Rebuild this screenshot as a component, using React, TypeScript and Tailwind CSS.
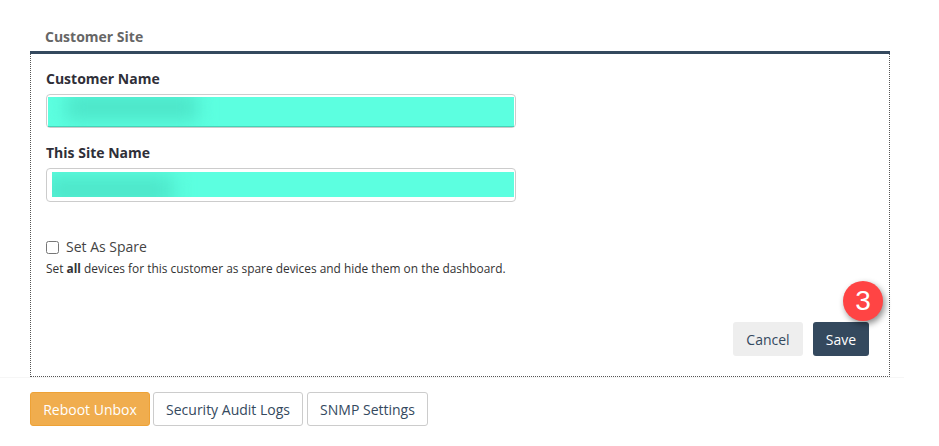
export default function App() {
  return (
    <div className="relative w-[939px] h-[446px] bg-white overflow-hidden font-['Open_Sans',sans-serif] text-[#333]">
      <div className="ml-[30px] w-[860px] pt-[27px]">
        <div className="pl-[15px] h-[24px] text-[14px] leading-[20px] font-bold text-[#666]">Customer Site</div>
        <div className="h-[3px] bg-[#34495e]" />
        <div className="relative h-[323px] border-l border-r border-b border-dotted border-[#555] pl-[15px] pr-[20px] pt-[15px]">
          <div className="h-[20px] text-[14px] leading-[20px] font-bold text-[#2f2f38]">Customer Name</div>
          <div className="mt-[5px] w-[470px] h-[34px] border border-[#ccc] rounded-[4px] pt-[2px] pl-[1px] pr-[1px]">
            <div className="relative h-[30px] bg-[#5cffe0] border-b border-[#45d4b8] overflow-hidden">
              <div className="absolute left-[18px] top-[-4px] w-[132px] h-[28px] bg-[#4de6c9] blur-[9px]" />
            </div>
          </div>
          <div className="mt-[15px] h-[20px] text-[14px] leading-[20px] font-bold text-[#2f2f38]">This Site Name</div>
          <div className="mt-[5px] w-[470px] h-[34px] border border-[#ccc] rounded-[4px] pt-[3px] pl-[5px] pr-[1px]">
            <div className="relative h-[25px] bg-[#5cffe0] overflow-hidden">
              <div className="absolute left-[-8px] top-[3px] w-[130px] h-[30px] bg-[#4de6c9] blur-[10px]" />
            </div>
          </div>
          <label className="mt-[35px] flex items-center h-[20px]">
            <input type="checkbox" className="w-[13px] h-[13px] m-0" />
            <span className="ml-[7px] text-[14px] leading-[20px] text-[#444]">Set As Spare</span>
          </label>
          <p className="mt-[1px] text-[11.9px] leading-[20px] text-[#333]">
            Set <b>all</b> devices for this customer as spare devices and hide them on the dashboard.
          </p>
          <div className="mt-[44px] flex justify-end gap-[10px]">
            <button className="w-[70px] h-[34px] rounded-[3px] bg-[#eeeeee] text-[14px] text-[#34495e]">Cancel</button>
            <button className="w-[56px] h-[34px] rounded-[3px] bg-[#34495e] text-[14px] text-white">Save</button>
          </div>
        </div>
      </div>
      <div className="h-px w-[904px] bg-[#f6f6f6]" />
      <div className="ml-[30px] mt-[14px] flex gap-[3px]">
        <button className="w-[120px] h-[34px] rounded-[3px] border border-[#eea236] bg-[#f0ad4e] text-[14px] text-white">Reboot Unbox</button>
        <button className="w-[150px] h-[34px] rounded-[3px] border border-[#ccc] bg-white text-[14px] text-[#34495e]">Security Audit Logs</button>
        <button className="ml-px w-[121px] h-[34px] rounded-[3px] border border-[#ccc] bg-white text-[14px] text-[#34495e]">SNMP Settings</button>
      </div>
      <div className="absolute left-[843px] top-[281px] w-[40px] h-[40px] rounded-full bg-[#ff4444] shadow-[2px_3px_6px_rgba(0,0,0,0.45)] flex items-center justify-center font-['Liberation_Sans',sans-serif] text-[28px] text-white">3</div>
    </div>
  );
}
